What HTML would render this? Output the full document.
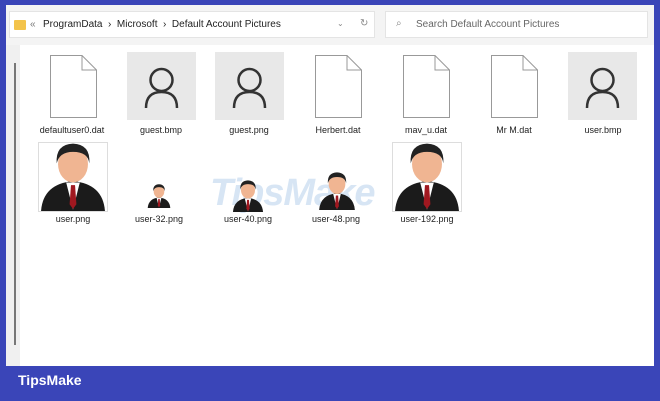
<!DOCTYPE html>
<html><head><meta charset="utf-8"><style>
*{margin:0;padding:0;box-sizing:border-box}
body{width:660px;height:401px;background:#3a45b8;position:relative;overflow:hidden;font-family:"Liberation Sans",sans-serif;}
.panel{position:absolute;left:6px;top:5px;width:648px;height:361px;background:#fff;}
.top{position:absolute;left:0;top:0;width:648px;height:40px;background:#f4f4f4;}
.addr{position:absolute;left:3px;top:6px;width:366px;height:27px;background:#fff;border:1px solid #e4e4e4;font-size:10px;color:#222;}
.search{position:absolute;left:379px;top:6px;width:263px;height:27px;background:#fff;border:1px solid #e4e4e4;font-size:10px;color:#666;}
.side{position:absolute;left:0;top:40px;width:14px;height:321px;background:#f0f0f0;}
.line{position:absolute;left:8px;top:18px;width:2px;height:282px;background:#777;}
.lbl{position:absolute;font-size:9px;color:#222;text-align:center;width:90px;}
.file{position:absolute;width:47px;height:63px;}
.gsq{position:absolute;width:69px;height:68px;background:#e8e8e8;}
.wm{position:absolute;left:210px;top:172px;font-size:38px;font-weight:bold;font-style:italic;color:rgba(110,160,215,0.28);letter-spacing:-1px}
.foot{position:absolute;left:18px;top:372px;color:#fff;font-weight:bold;font-size:14px;}
</style></head><body>
<div class="panel">
 <div class="top">
  <div class="addr">
   <div style="position:absolute;left:4px;top:8px;width:12px;height:10px;background:#f3c34a;border-radius:1px"></div>
   <span style="position:absolute;left:20px;top:7px;color:#777">«</span>
   <span style="position:absolute;left:33px;top:7px">ProgramData &nbsp;›&nbsp; Microsoft &nbsp;›&nbsp; Default Account Pictures</span>
   <span style="position:absolute;left:327px;top:7px;color:#888;font-size:8px">⌄</span>
   <span style="position:absolute;left:350px;top:6px;color:#888">↻</span>
  </div>
  <div class="search"><span style="position:absolute;left:10px;top:6px;color:#888">⌕</span><span style="position:absolute;left:30px;top:7px">Search Default Account Pictures</span></div>
 </div>
 <div class="side"><div class="line"></div></div>
</div>
<svg width="0" height="0" style="position:absolute"><defs>
<g id="f"><path d="M0.5 0.5H32L46.5 15V62.5H0.5Z" fill="#fff" stroke="#999"/><path d="M32 0.5V15H46.5" fill="none" stroke="#999"/></g>
<g id="p"><circle cx="34.5" cy="28" r="11" fill="none" stroke="#333" stroke-width="2.5"/><path d="M19 56Q19 40 34.5 40Q50 40 50 56" fill="none" stroke="#333" stroke-width="2.5"/></g>
<g id="m"><path d="M3 100Q6 60 50 56Q94 60 97 100Z" fill="#1b1b1b"/><path d="M40 58L50 98L60 58Z" fill="#fff"/><path d="M47 62L53 62L55 90L50 97L45 90Z" fill="#a01820"/><ellipse cx="50" cy="31" rx="22" ry="27" fill="#f0b592"/><path d="M26 30Q24 2 50 1Q76 2 74 30Q72 13 50 13Q30 13 26 30Z" fill="#222"/></g>
</defs></svg>
<svg class="file" style="left:50px;top:55px"><use href="#f"/></svg>
<div class="gsq" style="left:127px;top:52px"><svg width="69" height="68"><use href="#p"/></svg></div>
<div class="gsq" style="left:215px;top:52px"><svg width="69" height="68"><use href="#p"/></svg></div>
<svg class="file" style="left:315px;top:55px"><use href="#f"/></svg>
<svg class="file" style="left:403px;top:55px"><use href="#f"/></svg>
<svg class="file" style="left:491px;top:55px"><use href="#f"/></svg>
<div class="gsq" style="left:568px;top:52px"><svg width="69" height="68"><use href="#p"/></svg></div>
<div class="lbl" style="left:27px;top:125px">defaultuser0.dat</div>
<div class="lbl" style="left:116px;top:125px">guest.bmp</div>
<div class="lbl" style="left:204px;top:125px">guest.png</div>
<div class="lbl" style="left:293px;top:125px">Herbert.dat</div>
<div class="lbl" style="left:381px;top:125px">mav_u.dat</div>
<div class="lbl" style="left:469px;top:125px">Mr M.dat</div>
<div class="lbl" style="left:558px;top:125px">user.bmp</div>
<div class="wm">TipsMake</div>
<div style="position:absolute;left:38px;top:142px;width:70px;height:70px;border:1px solid #ddd"><svg width="68" height="68" viewBox="0 0 100 100"><use href="#m"/></svg></div>
<svg style="position:absolute;left:147px;top:184px" width="24" height="24" viewBox="0 0 100 100"><use href="#m"/></svg>
<svg style="position:absolute;left:232px;top:180px" width="32" height="32" viewBox="0 0 100 100"><use href="#m"/></svg>
<svg style="position:absolute;left:318px;top:172px" width="38" height="38" viewBox="0 0 100 100"><use href="#m"/></svg>
<div style="position:absolute;left:392px;top:142px;width:70px;height:70px;border:1px solid #ddd"><svg width="68" height="68" viewBox="0 0 100 100"><use href="#m"/></svg></div>
<div class="lbl" style="left:28px;top:214px">user.png</div>
<div class="lbl" style="left:114px;top:214px">user-32.png</div>
<div class="lbl" style="left:203px;top:214px">user-40.png</div>
<div class="lbl" style="left:291px;top:214px">user-48.png</div>
<div class="lbl" style="left:382px;top:214px">user-192.png</div>
<div class="foot">TipsMake</div>
</body></html>
